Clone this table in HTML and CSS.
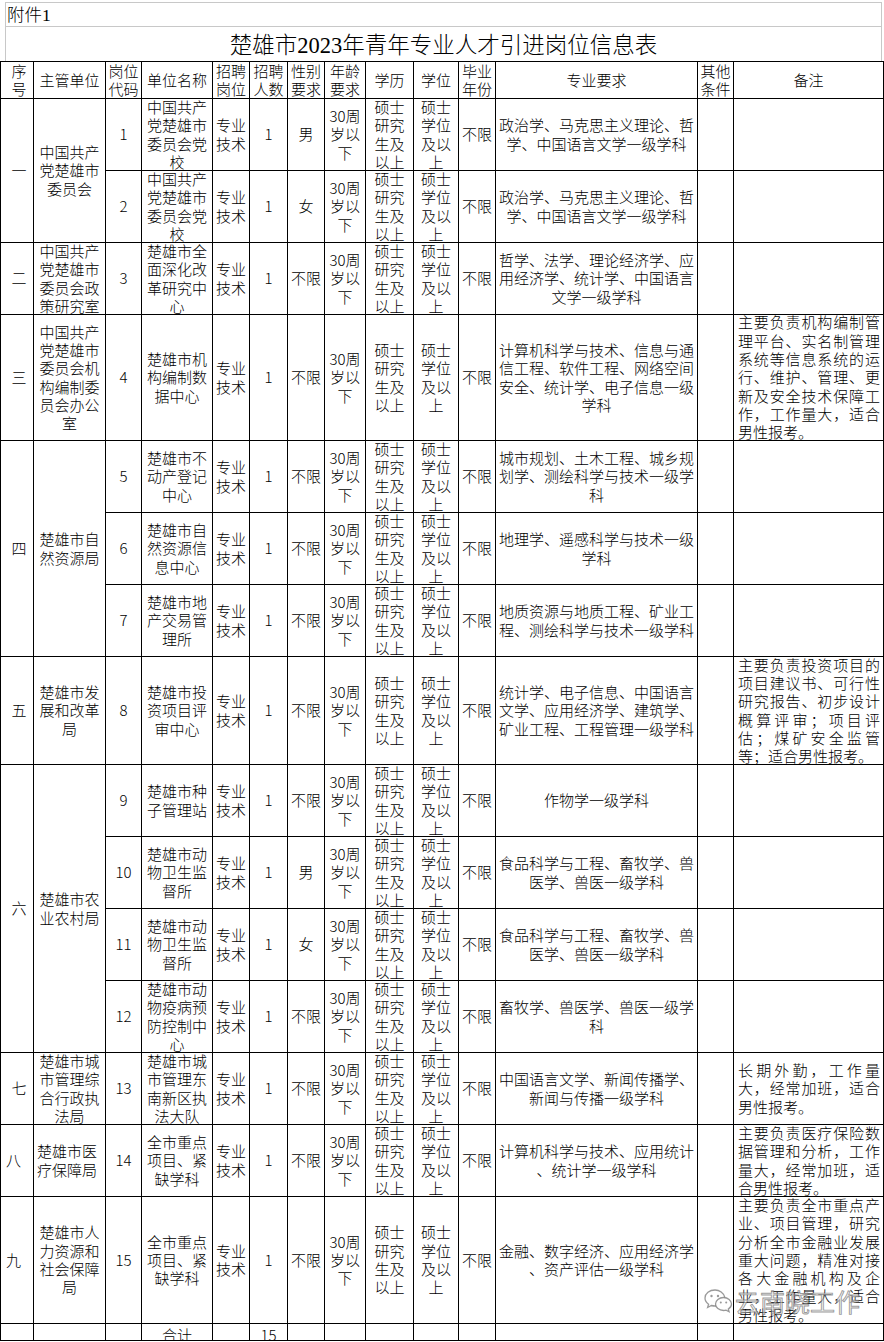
FILE: index.html
```html
<!DOCTYPE html>
<html lang="zh-CN">
<head>
<meta charset="utf-8">
<title>楚雄市2023年青年专业人才引进岗位信息表</title>
<link rel="stylesheet" href="styles.css">
</head>
<body>
<div class="top">
  <div class="annex">附件1</div>
  <div class="title">楚雄市2023年青年专业人才引进岗位信息表</div>
</div>
<table class="sheet">
  <colgroup>
    <col style="width:33px"><col style="width:72px"><col style="width:36px"><col style="width:71px">
    <col style="width:37px"><col style="width:38px"><col style="width:37px"><col style="width:41px">
    <col style="width:48px"><col style="width:45px"><col style="width:37px"><col style="width:202px">
    <col style="width:36px"><col style="width:150px">
  </colgroup>
  <tr class="h37">
    <td><div class="c seq">序<br>号</div></td>
    <td><div class="c">主管单位</div></td>
    <td><div class="c">岗位<br>代码</div></td>
    <td><div class="c">单位名称</div></td>
    <td><div class="c">招聘<br>岗位</div></td>
    <td><div class="c">招聘<br>人数</div></td>
    <td><div class="c">性别<br>要求</div></td>
    <td><div class="c">年龄<br>要求</div></td>
    <td><div class="c">学历</div></td>
    <td><div class="c">学位</div></td>
    <td><div class="c">毕业<br>年份</div></td>
    <td><div class="c">专业要求</div></td>
    <td><div class="c">其他<br>条件</div></td>
    <td><div class="c">备注</div></td>
  </tr>

  <tr class="r72">
    <td rowspan="2"><div class="c rs seq">一</div></td>
    <td rowspan="2"><div class="c rs">中国共产<br>党楚雄市<br>委员会</div></td>
    <td><div class="c">1</div></td>
    <td><div class="c">中国共产<br>党楚雄市<br>委员会党<br>校</div></td>
    <td><div class="c">专业<br>技术</div></td>
    <td><div class="c">1</div></td>
    <td><div class="c">男</div></td>
    <td><div class="c">30周<br>岁以<br>下</div></td>
    <td><div class="c">硕士<br>研究<br>生及<br>以上</div></td>
    <td><div class="c">硕士<br>学位<br>及以<br>上</div></td>
    <td><div class="c">不限</div></td>
    <td><div class="c">政治学、马克思主义理论、哲<br>学、中国语言文学一级学科</div></td>
    <td><div class="c"></div></td>
    <td><div class="c"></div></td>
  </tr>
  <tr class="r72">
    <td><div class="c">2</div></td>
    <td><div class="c">中国共产<br>党楚雄市<br>委员会党<br>校</div></td>
    <td><div class="c">专业<br>技术</div></td>
    <td><div class="c">1</div></td>
    <td><div class="c">女</div></td>
    <td><div class="c">30周<br>岁以<br>下</div></td>
    <td><div class="c">硕士<br>研究<br>生及<br>以上</div></td>
    <td><div class="c">硕士<br>学位<br>及以<br>上</div></td>
    <td><div class="c">不限</div></td>
    <td><div class="c">政治学、马克思主义理论、哲<br>学、中国语言文学一级学科</div></td>
    <td><div class="c"></div></td>
    <td><div class="c"></div></td>
  </tr>

  <tr class="r72">
    <td><div class="c seq">二</div></td>
    <td><div class="c">中国共产<br>党楚雄市<br>委员会政<br>策研究室</div></td>
    <td><div class="c">3</div></td>
    <td><div class="c">楚雄市全<br>面深化改<br>革研究中<br>心</div></td>
    <td><div class="c">专业<br>技术</div></td>
    <td><div class="c">1</div></td>
    <td><div class="c">不限</div></td>
    <td><div class="c">30周<br>岁以<br>下</div></td>
    <td><div class="c">硕士<br>研究<br>生及<br>以上</div></td>
    <td><div class="c">硕士<br>学位<br>及以<br>上</div></td>
    <td><div class="c">不限</div></td>
    <td><div class="c">哲学、法学、理论经济学、应<br>用经济学、统计学、中国语言<br>文学一级学科</div></td>
    <td><div class="c"></div></td>
    <td><div class="c"></div></td>
  </tr>

  <tr class="r126">
    <td><div class="c seq">三</div></td>
    <td><div class="c">中国共产<br>党楚雄市<br>委员会机<br>构编制委<br>员会办公<br>室</div></td>
    <td><div class="c">4</div></td>
    <td><div class="c">楚雄市机<br>构编制数<br>据中心</div></td>
    <td><div class="c">专业<br>技术</div></td>
    <td><div class="c">1</div></td>
    <td><div class="c">不限</div></td>
    <td><div class="c">30周<br>岁以<br>下</div></td>
    <td><div class="c">硕士<br>研究<br>生及<br>以上</div></td>
    <td><div class="c">硕士<br>学位<br>及以<br>上</div></td>
    <td><div class="c">不限</div></td>
    <td><div class="c">计算机科学与技术、信息与通<br>信工程、软件工程、网络空间<br>安全、统计学、电子信息一级<br>学科</div></td>
    <td><div class="c"></div></td>
    <td><div class="c note"><span class="ln">主要负责机构编制管</span><span class="ln">理平台、实名制管理</span><span class="ln">系统等信息系统的运</span><span class="ln">行、维护、管理、更</span><span class="ln">新及安全技术保障工</span><span class="ln">作，工作量大，适合</span><span class="ln">男性报考。</span></div></td>
  </tr>

  <tr class="r72">
    <td rowspan="3"><div class="c rs seq">四</div></td>
    <td rowspan="3"><div class="c rs">楚雄市自<br>然资源局</div></td>
    <td><div class="c">5</div></td>
    <td><div class="c">楚雄市不<br>动产登记<br>中心</div></td>
    <td><div class="c">专业<br>技术</div></td>
    <td><div class="c">1</div></td>
    <td><div class="c">不限</div></td>
    <td><div class="c">30周<br>岁以<br>下</div></td>
    <td><div class="c">硕士<br>研究<br>生及<br>以上</div></td>
    <td><div class="c">硕士<br>学位<br>及以<br>上</div></td>
    <td><div class="c">不限</div></td>
    <td><div class="c">城市规划、土木工程、城乡规<br>划学、测绘科学与技术一级学<br>科</div></td>
    <td><div class="c"></div></td>
    <td><div class="c"></div></td>
  </tr>
  <tr class="r72">
    <td><div class="c">6</div></td>
    <td><div class="c">楚雄市自<br>然资源信<br>息中心</div></td>
    <td><div class="c">专业<br>技术</div></td>
    <td><div class="c">1</div></td>
    <td><div class="c">不限</div></td>
    <td><div class="c">30周<br>岁以<br>下</div></td>
    <td><div class="c">硕士<br>研究<br>生及<br>以上</div></td>
    <td><div class="c">硕士<br>学位<br>及以<br>上</div></td>
    <td><div class="c">不限</div></td>
    <td><div class="c">地理学、遥感科学与技术一级<br>学科</div></td>
    <td><div class="c"></div></td>
    <td><div class="c"></div></td>
  </tr>
  <tr class="r72">
    <td><div class="c">7</div></td>
    <td><div class="c">楚雄市地<br>产交易管<br>理所</div></td>
    <td><div class="c">专业<br>技术</div></td>
    <td><div class="c">1</div></td>
    <td><div class="c">不限</div></td>
    <td><div class="c">30周<br>岁以<br>下</div></td>
    <td><div class="c">硕士<br>研究<br>生及<br>以上</div></td>
    <td><div class="c">硕士<br>学位<br>及以<br>上</div></td>
    <td><div class="c">不限</div></td>
    <td><div class="c">地质资源与地质工程、矿业工<br>程、测绘科学与技术一级学科</div></td>
    <td><div class="c"></div></td>
    <td><div class="c"></div></td>
  </tr>

  <tr class="r108">
    <td><div class="c seq">五</div></td>
    <td><div class="c">楚雄市发<br>展和改革<br>局</div></td>
    <td><div class="c">8</div></td>
    <td><div class="c">楚雄市投<br>资项目评<br>审中心</div></td>
    <td><div class="c">专业<br>技术</div></td>
    <td><div class="c">1</div></td>
    <td><div class="c">不限</div></td>
    <td><div class="c">30周<br>岁以<br>下</div></td>
    <td><div class="c">硕士<br>研究<br>生及<br>以上</div></td>
    <td><div class="c">硕士<br>学位<br>及以<br>上</div></td>
    <td><div class="c">不限</div></td>
    <td><div class="c">统计学、电子信息、中国语言<br>文学、应用经济学、建筑学、<br>矿业工程、工程管理一级学科</div></td>
    <td><div class="c"></div></td>
    <td><div class="c note"><span class="ln">主要负责投资项目的</span><span class="ln">项目建议书、可行性</span><span class="ln">研究报告、初步设计</span><span class="ln">概算评审；项目评</span><span class="ln">估；煤矿安全监管</span><span class="ln">等；适合男性报考。</span></div></td>
  </tr>

  <tr class="r72">
    <td rowspan="4"><div class="c rs seq">六</div></td>
    <td rowspan="4"><div class="c rs">楚雄市农<br>业农村局</div></td>
    <td><div class="c">9</div></td>
    <td><div class="c">楚雄市种<br>子管理站</div></td>
    <td><div class="c">专业<br>技术</div></td>
    <td><div class="c">1</div></td>
    <td><div class="c">不限</div></td>
    <td><div class="c">30周<br>岁以<br>下</div></td>
    <td><div class="c">硕士<br>研究<br>生及<br>以上</div></td>
    <td><div class="c">硕士<br>学位<br>及以<br>上</div></td>
    <td><div class="c">不限</div></td>
    <td><div class="c">作物学一级学科</div></td>
    <td><div class="c"></div></td>
    <td><div class="c"></div></td>
  </tr>
  <tr class="r72">
    <td><div class="c">10</div></td>
    <td><div class="c">楚雄市动<br>物卫生监<br>督所</div></td>
    <td><div class="c">专业<br>技术</div></td>
    <td><div class="c">1</div></td>
    <td><div class="c">男</div></td>
    <td><div class="c">30周<br>岁以<br>下</div></td>
    <td><div class="c">硕士<br>研究<br>生及<br>以上</div></td>
    <td><div class="c">硕士<br>学位<br>及以<br>上</div></td>
    <td><div class="c">不限</div></td>
    <td><div class="c">食品科学与工程、畜牧学、兽<br>医学、兽医一级学科</div></td>
    <td><div class="c"></div></td>
    <td><div class="c"></div></td>
  </tr>
  <tr class="r72">
    <td><div class="c">11</div></td>
    <td><div class="c">楚雄市动<br>物卫生监<br>督所</div></td>
    <td><div class="c">专业<br>技术</div></td>
    <td><div class="c">1</div></td>
    <td><div class="c">女</div></td>
    <td><div class="c">30周<br>岁以<br>下</div></td>
    <td><div class="c">硕士<br>研究<br>生及<br>以上</div></td>
    <td><div class="c">硕士<br>学位<br>及以<br>上</div></td>
    <td><div class="c">不限</div></td>
    <td><div class="c">食品科学与工程、畜牧学、兽<br>医学、兽医一级学科</div></td>
    <td><div class="c"></div></td>
    <td><div class="c"></div></td>
  </tr>
  <tr class="r72">
    <td><div class="c">12</div></td>
    <td><div class="c">楚雄市动<br>物疫病预<br>防控制中<br>心</div></td>
    <td><div class="c">专业<br>技术</div></td>
    <td><div class="c">1</div></td>
    <td><div class="c">不限</div></td>
    <td><div class="c">30周<br>岁以<br>下</div></td>
    <td><div class="c">硕士<br>研究<br>生及<br>以上</div></td>
    <td><div class="c">硕士<br>学位<br>及以<br>上</div></td>
    <td><div class="c">不限</div></td>
    <td><div class="c">畜牧学、兽医学、兽医一级学<br>科</div></td>
    <td><div class="c"></div></td>
    <td><div class="c"></div></td>
  </tr>

  <tr class="r72">
    <td><div class="c seq">七</div></td>
    <td><div class="c">楚雄市城<br>市管理综<br>合行政执<br>法局</div></td>
    <td><div class="c">13</div></td>
    <td><div class="c">楚雄市城<br>市管理东<br>南新区执<br>法大队</div></td>
    <td><div class="c">专业<br>技术</div></td>
    <td><div class="c">1</div></td>
    <td><div class="c">不限</div></td>
    <td><div class="c">30周<br>岁以<br>下</div></td>
    <td><div class="c">硕士<br>研究<br>生及<br>以上</div></td>
    <td><div class="c">硕士<br>学位<br>及以<br>上</div></td>
    <td><div class="c">不限</div></td>
    <td><div class="c">中国语言文学、新闻传播学、<br>新闻与传播一级学科</div></td>
    <td><div class="c"></div></td>
    <td><div class="c note"><span class="ln">长期外勤，工作量</span><span class="ln">大，经常加班，适合</span><span class="ln">男性报考。</span></div></td>
  </tr>

  <tr class="r72">
    <td><div class="c seq l">八</div></td>
    <td><div class="c l">楚雄市医<br>疗保障局</div></td>
    <td><div class="c">14</div></td>
    <td><div class="c">全市重点<br>项目、紧<br>缺学科</div></td>
    <td><div class="c">专业<br>技术</div></td>
    <td><div class="c">1</div></td>
    <td><div class="c">不限</div></td>
    <td><div class="c">30周<br>岁以<br>下</div></td>
    <td><div class="c">硕士<br>研究<br>生及<br>以上</div></td>
    <td><div class="c">硕士<br>学位<br>及以<br>上</div></td>
    <td><div class="c">不限</div></td>
    <td><div class="c">计算机科学与技术、应用统计<br>、统计学一级学科</div></td>
    <td><div class="c"></div></td>
    <td><div class="c note"><span class="ln">主要负责医疗保险数</span><span class="ln">据管理和分析，工作</span><span class="ln">量大，经常加班，适</span><span class="ln">合男性报考。</span></div></td>
  </tr>

  <tr class="r127">
    <td><div class="c seq l">九</div></td>
    <td><div class="c">楚雄市人<br>力资源和<br>社会保障<br>局</div></td>
    <td><div class="c">15</div></td>
    <td><div class="c">全市重点<br>项目、紧<br>缺学科</div></td>
    <td><div class="c">专业<br>技术</div></td>
    <td><div class="c">1</div></td>
    <td><div class="c">不限</div></td>
    <td><div class="c">30周<br>岁以<br>下</div></td>
    <td><div class="c">硕士<br>研究<br>生及<br>以上</div></td>
    <td><div class="c">硕士<br>学位<br>及以<br>上</div></td>
    <td><div class="c">不限</div></td>
    <td><div class="c">金融、数字经济、应用经济学<br>、资产评估一级学科</div></td>
    <td><div class="c"></div></td>
    <td><div class="c note"><span class="ln">主要负责全市重点产</span><span class="ln">业、项目管理，研究</span><span class="ln">分析全市金融业发展</span><span class="ln">重大问题，精准对接</span><span class="ln">各大金融机构及企</span><span class="ln">业，工作量大，适合</span><span class="ln">男性报考。</span></div></td>
  </tr>

  <tr class="r17">
    <td><div class="c"></div></td>
    <td><div class="c"></div></td>
    <td><div class="c"></div></td>
    <td><div class="c">合计</div></td>
    <td><div class="c"></div></td>
    <td><div class="c">15</div></td>
    <td><div class="c"></div></td>
    <td><div class="c"></div></td>
    <td><div class="c"></div></td>
    <td><div class="c"></div></td>
    <td><div class="c"></div></td>
    <td><div class="c"></div></td>
    <td><div class="c"></div></td>
    <td><div class="c"></div></td>
  </tr>
</table>

<div class="wm">
  <svg class="wm-icon" width="30" height="26" viewBox="0 0 30 26">
    <path d="M12 2C6.5 2 2 5.6 2 10c0 2.5 1.4 4.7 3.6 6.2L4.6 19.5l3.8-2c1.1.3 2.3.5 3.6.5.4 0 .8 0 1.2-.1" fill="none" stroke="rgba(110,110,110,0.7)" stroke-width="1.3"/>
    <path d="M21.8 9.2C20.6 5 16.6 2 12 2" fill="none" stroke="rgba(110,110,110,0.7)" stroke-width="1.3"/>
    <circle cx="8.5" cy="8" r="1.2" fill="rgba(110,110,110,0.7)"/>
    <circle cx="15" cy="8" r="1.2" fill="rgba(110,110,110,0.7)"/>
    <path d="M20.5 9.5c-4.4 0-8 2.9-8 6.5s3.6 6.5 8 6.5c.9 0 1.8-.1 2.6-.4l3 1.6-.8-2.6c1.9-1.2 3.2-3 3.2-5.1 0-3.6-3.6-6.5-8-6.5z" fill="rgba(255,255,255,0.55)" stroke="rgba(110,110,110,0.7)" stroke-width="1.3"/>
    <circle cx="17.8" cy="14.5" r="1" fill="rgba(110,110,110,0.7)"/>
    <circle cx="23.2" cy="14.5" r="1" fill="rgba(110,110,110,0.7)"/>
  </svg>
  <span class="wm-text">云南晓工作</span>
</div>
</body>
</html>
```

FILE: styles.css
```css
html, body {
  margin: 0;
  padding: 0;
  background: #fff;
}
body {
  width: 884px;
  position: relative;
  font-family: "Noto Sans CJK SC", "Noto Sans", sans-serif;
  font-size: 15px;
  font-weight: 300;
  color: #000;
}

.top {
  margin: 2px 2px 0 5px;
  border: 1px solid #c8c8c8;
  border-bottom: none;
}
.annex {
  height: 23px;
  line-height: 24px;
  border-bottom: 1px solid #c8c8c8;
  padding-left: 1px;
  font-family: "Liberation Serif", "Noto Sans CJK SC", serif;
  font-size: 17.5px;
}
.title {
  height: 34px;
  line-height: 38px;
  text-align: center;
  font-family: "Liberation Serif", "Noto Sans CJK SC", serif;
  font-size: 22.5px;
}

.sheet {
  border-collapse: collapse;
  table-layout: fixed;
  width: 884px;
}
.sheet td {
  border: 1px solid #000;
  padding: 0;
  vertical-align: middle;
}
.c {
  display: flex;
  flex-direction: column;
  justify-content: center;
  align-items: center;
  overflow: hidden;
  text-align: center;
  line-height: 18.3px;
  white-space: nowrap;
  box-sizing: border-box;
}

.h37 .c { height: 36px; }
.r72 .c { height: 71px; }
.r108 .c { height: 107px; }
.r126 .c { height: 125px; }
.r127 .c { height: 126px; }
.r17 .c {
  height: 16px;
  justify-content: flex-start;
  padding-top: 2px;
}
.sheet .c.rs { height: auto; }

.seq { padding-left: 4px; }
.c.l {
  align-items: flex-start;
  text-align: left;
  padding-left: 3px;
}
.c.seq.l { padding-left: 5px; }

.note {
  align-items: stretch;
  padding: 0 3px 0 4px;
}
.note .ln {
  display: block;
  text-align: justify;
  text-align-last: justify;
}
.note .ln:last-child {
  text-align-last: left;
}

.wm {
  position: absolute;
  left: 703px;
  top: 1286px;
  display: flex;
  align-items: center;
  gap: 2px;
  pointer-events: none;
}
.wm-text {
  font-size: 25px;
  line-height: 30px;
  font-weight: 400;
  color: rgba(235, 235, 235, 0.6);
  -webkit-text-stroke: 0.9px rgba(100, 100, 100, 0.65);
}
```
